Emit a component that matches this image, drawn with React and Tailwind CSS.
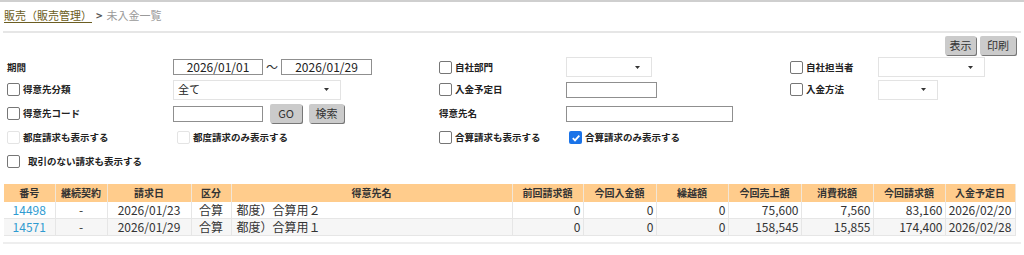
import React from "react";

const jp = { fontFamily: "'Noto Sans CJK JP', 'Noto Sans', sans-serif" };

function Check({ checked = false, disabled = false }) {
    if (checked) {
        return (
            <span className="inline-flex h-[13px] w-[13px] shrink-0 items-center justify-center rounded-[2px] bg-[#1a73e8]">
                <svg width="10" height="10" viewBox="0 0 10 10">
                    <path d="M1.8 5.2 L4 7.4 L8.3 2.6" fill="none" stroke="white" strokeWidth="1.8" />
                </svg>
            </span>
        );
    }
    return (
        <span className={`inline-block h-[13px] w-[13px] shrink-0 rounded-[2px] border bg-white ${disabled ? "border-[#e4e4e4] bg-[#f6f6f6]" : "border-[#767676]"}`} />
    );
}

function Label({ children, check, checked, disabled, className = "" }) {
    return (
        <div className={`flex items-center gap-[3px] text-[9.5px] font-bold text-[#222] ${className}`}>
            {check && <Check checked={checked} disabled={disabled} />}
            <span>{children}</span>
        </div>
    );
}

function Select({ w, children }) {
    return (
        <div className={`flex ${w} h-[20px] items-center justify-between border border-[#e3e3e3] bg-white pl-[4px] pr-[11px] text-[11px] text-[#222]`}>
            <span>{children}</span>
            <svg width="5" height="3" viewBox="0 0 5 3">
                <path d="M0 0 H5 L2.5 3 Z" fill="#333" />
            </svg>
        </div>
    );
}

function Input({ w, children }) {
    return (
        <div className={`flex ${w} h-[16px] items-center justify-center border border-[#8f8f8f] bg-white text-[12px] leading-none text-[#222]`}>
            {children}
        </div>
    );
}

function Btn({ children, className = "" }) {
    return (
        <div className={`flex h-[19px] items-center justify-center rounded-[2px] bg-[#cbcbcb] text-[11px] text-[#333] shadow-[1px_1px_0_#777] ${className}`}>
            {children}
        </div>
    );
}

const columns = [
    { label: "番号", w: "w-[51px]" },
    { label: "継続契約", w: "w-[52px]" },
    { label: "請求日", w: "w-[84px]" },
    { label: "区分", w: "w-[40px]" },
    { label: "得意先名", w: "w-[281px]" },
    { label: "前回請求額", w: "w-[71px]" },
    { label: "今回入金額", w: "w-[73px]" },
    { label: "繰越額", w: "w-[72px]" },
    { label: "今回売上額", w: "w-[73px]" },
    { label: "消費税額", w: "w-[72px]" },
    { label: "今回請求額", w: "w-[72px]" },
    { label: "入金予定日", w: "w-[70px]" },
];

const rows = [
    ["14498", "-", "2026/01/23", "合算", "都度）合算用２", "0", "0", "0", "75,600", "7,560", "83,160", "2026/02/20"],
    ["14571", "-", "2026/01/29", "合算", "都度）合算用１", "0", "0", "0", "158,545", "15,855", "174,400", "2026/02/28"],
];

export default function App() {
    return (
        <div className="h-[255px] w-[1024px] overflow-hidden bg-white" style={jp}>
            <div className="h-[2px] bg-[#cfcfcf]" />

            {/* breadcrumb */}
            <div className="flex items-center px-[4px] pt-[5px] text-[11px]">
                <span className="text-[#6b5d22] underline underline-offset-2">販売（販売管理）</span>
                <span className="mx-[4px] font-bold text-[#555]">&gt;</span>
                <span className="text-[#9a9a9a]">未入金一覧</span>
            </div>
            <div className="mx-[3px] mt-[7px] h-[2px] bg-[#e6e6e6]" />

            {/* buttons */}
            <div className="flex justify-end gap-[4px] pr-[8px] pt-[3px]">
                <Btn className="w-[31px]">表示</Btn>
                <Btn className="w-[36px]">印刷</Btn>
            </div>

            {/* form */}
            <div className="mt-[2px] pl-[7px]">
                <div className="flex h-[21px] items-center">
                    <Label className="w-[166px]">期間</Label>
                    <div className="flex w-[266px] items-center">
                        <Input w="w-[90px]">2026/01/01</Input>
                        <span className="mx-[3px] text-[12px] text-[#333]">〜</span>
                        <Input w="w-[91px]">2026/01/29</Input>
                    </div>
                    <Label check className="w-[127px]">自社部門</Label>
                    <div className="w-[224px]"><Select w="w-[86px]" /></div>
                    <Label check className="w-[88px]">自社担当者</Label>
                    <Select w="w-[107px]" />
                </div>
                <div className="flex h-[24px] items-center">
                    <Label check className="w-[166px]">得意先分類</Label>
                    <div className="w-[266px]"><Select w="w-[168px]">全て</Select></div>
                    <Label check className="w-[127px]">入金予定日</Label>
                    <div className="w-[224px]"><Input w="w-[91px]" /></div>
                    <Label check className="w-[88px]">入金方法</Label>
                    <Select w="w-[60px]" />
                </div>
                <div className="flex h-[24px] items-center">
                    <Label check className="w-[166px]">得意先コード</Label>
                    <div className="flex w-[266px] items-center">
                        <Input w="w-[90px]" />
                        <Btn className="ml-[7px] w-[32px]">GO</Btn>
                        <Btn className="ml-[7px] w-[35px]">検索</Btn>
                    </div>
                    <Label className="w-[127px]">得意先名</Label>
                    <Input w="w-[167px]" />
                </div>
                <div className="flex h-[24px] items-center">
                    <Label check disabled className="w-[170px]">都度請求も表示する</Label>
                    <Label check disabled className="w-[262px]">都度請求のみ表示する</Label>
                    <Label check className="w-[130px]">合算請求も表示する</Label>
                    <Label check checked>合算請求のみ表示する</Label>
                </div>
                <div className="flex h-[24px] items-center">
                    <Label check className="gap-[8px]">取引のない請求も表示する</Label>
                </div>
            </div>

            {/* table */}
            <table className="ml-[4px] mt-[10px] border-collapse text-[10px] text-[#333]">
                <thead>
                    <tr className="h-[18px] bg-[#ffcc8c]">
                        {columns.map((c) => (
                            <th key={c.label} className={`${c.w} border-r border-[#f2e6d6] p-0 text-center font-bold`}>{c.label}</th>
                        ))}
                    </tr>
                </thead>
                <tbody>
                    {rows.map((r, i) => (
                        <tr key={r[0]} className={`h-[17px] border-b border-[#e6e6e6] ${i % 2 ? "bg-[#f6f6f6]" : "bg-white"}`}>
                            {r.map((v, j) => (
                                <td
                                    key={j}
                                    className={`border-r border-[#e6e6e6] p-0 text-[12px] leading-none ${j === 0 ? "text-center text-[#2e9bd1]" : j < 4 ? "text-center" : j === 4 ? "pl-[5px] text-left" : j === 11 ? "text-center" : "pr-[2px] text-right"}`}
                                >
                                    {v}
                                </td>
                            ))}
                        </tr>
                    ))}
                </tbody>
            </table>
            <div className="mx-[3px] mt-[6px] h-[2px] bg-[#eeeeee]" />
        </div>
    );
}
